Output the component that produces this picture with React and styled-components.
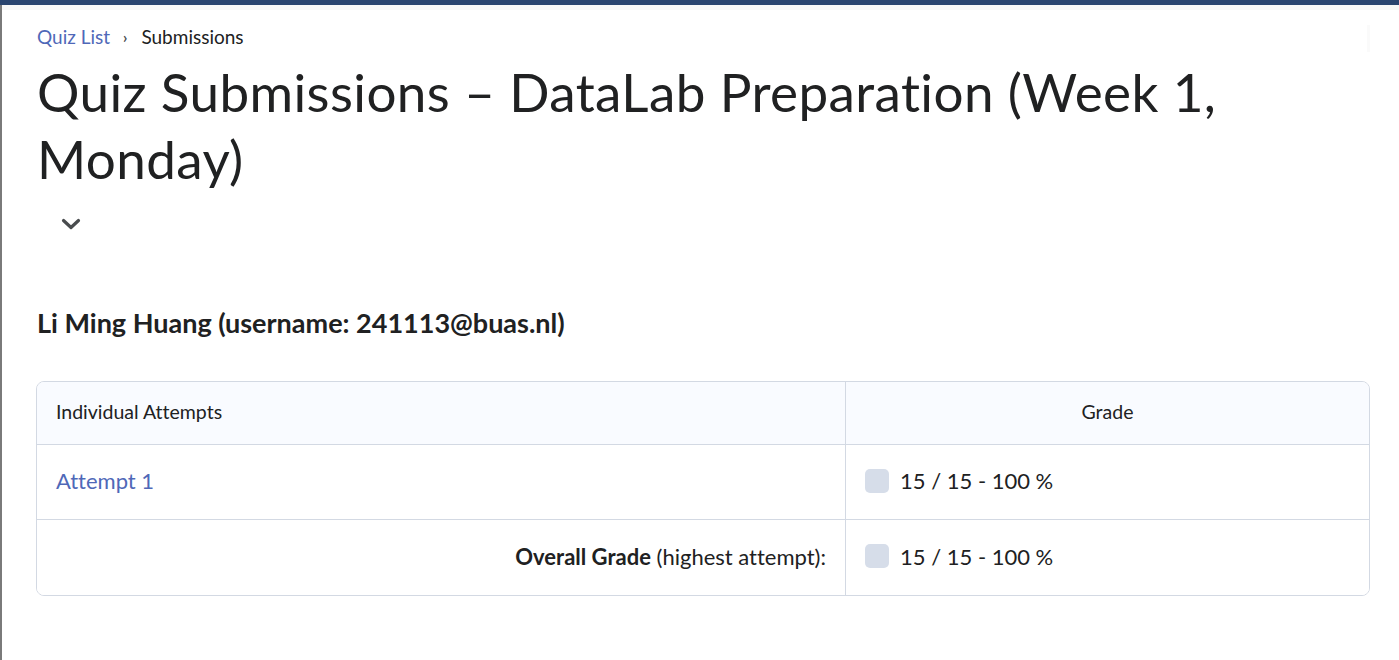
import React from 'react'
import styled, { createGlobalStyle } from 'styled-components'

const GlobalStyle = createGlobalStyle`
  html, body {
    margin: 0;
    padding: 0;
    background: #ffffff;
  }
  body {
    font-family: Lato, "Noto Sans", sans-serif;
    color: #202122;
    font-variant-ligatures: none;
  }
`

const Frame = styled.div`
  min-height: 660px;
  display: flex;
  flex-direction: column;
`

const TopBar = styled.div`
  height: 5px;
  background: #29446f;
`

const Body = styled.div`
  flex: 1;
  display: flex;
`

const LeftEdge = styled.div`
  width: 2px;
  background: #7a7a7a;
`

const Column = styled.div`
  flex: 1;
  display: flex;
  flex-direction: column;
`

const Shade = styled.div`
  height: 5px;
  background: #f7f7f7;
`

const Page = styled.main`
  flex: 1;
  padding: 15px 29px 40px 35px;
  position: relative;
`

const Breadcrumbs = styled.nav`
  display: flex;
  align-items: center;
  font-size: 19px;
  line-height: 24px;
`

const CrumbLink = styled.a`
  color: #4f68b8;
  text-decoration: none;
`

const Separator = styled.span`
  font-size: 15px;
  color: #494c4e;
  font-weight: 700;
  margin: 0 14px 0 13px;
`

const Title = styled.h1`
  margin: 9px 0 0;
  font-size: 53px;
  line-height: 67px;
  letter-spacing: 0.4px;
  font-weight: 400;
  color: #202122;
  max-width: 1230px;
`

const ToggleButton = styled.button`
  margin: 14px 0 0 16px;
  width: 36px;
  height: 36px;
  border: none;
  background: transparent;
  padding: 0;
  display: flex;
  align-items: center;
  justify-content: center;
`

const UserHeading = styled.h2`
  margin: 65px 0 0;
  font-size: 27px;
  line-height: 32px;
  font-weight: 700;
  color: #202122;
`

const Table = styled.div`
  margin: 42px 0 0 -1px;
  border: 1px solid #d3d9e3;
  border-radius: 8px;
  overflow: hidden;
`

const Row = styled.div`
  display: grid;
  grid-template-columns: 808px 1fr;
  height: ${p => p.$height}px;
  background: ${p => (p.$head ? '#f9fbff' : '#ffffff')};
  & + & {
    border-top: 1px solid #d3d9e3;
  }
`

const Cell = styled.div`
  display: flex;
  align-items: center;
  justify-content: ${p => p.$align || 'flex-start'};
  padding: 0 19px 3px;
  font-size: ${p => (p.$head ? '19.5px' : '22px')};
  color: #202122;
  & + & {
    border-left: 1px solid #d3d9e3;
  }
`

const AttemptLink = styled.a`
  color: #4f68b8;
  text-decoration: none;
`

const Chip = styled.span`
  width: 24px;
  height: 24px;
  border-radius: 5px;
  background: #d6dde9;
  margin-right: 11px;
  flex-shrink: 0;
`

const Faint = styled.div`
  position: absolute;
  right: 29px;
  top: 15px;
  width: 3px;
  height: 27px;
  background: #fafafa;
`

const Grade = ({ value }) => (
  <Cell>
    <Chip />
    <span>{value}</span>
  </Cell>
)

const App = () => {
  return (
    <>
      <GlobalStyle />
      <Frame>
        <TopBar />
        <Body>
          <LeftEdge />
          <Column>
            <Shade />
            <Page>
              <Faint />
              <Breadcrumbs>
                <CrumbLink href='#'>Quiz List</CrumbLink>
                <Separator>›</Separator>
                <span>Submissions</span>
              </Breadcrumbs>
              <Title>Quiz Submissions – DataLab Preparation (Week 1, Monday)</Title>
              <ToggleButton aria-label='Show description'>
                <svg width='20' height='12' viewBox='0 0 20 12'>
                  <path d='M2.5 2.5 L10 9.5 L17.5 2.5' fill='none' stroke='#494c4e' strokeWidth='3.2' strokeLinecap='round' strokeLinejoin='round' />
                </svg>
              </ToggleButton>
              <UserHeading>Li Ming Huang (username: 241113@buas.nl)</UserHeading>
              <Table>
                <Row $head $height={62}>
                  <Cell $head>Individual Attempts</Cell>
                  <Cell $head $align='center'>Grade</Cell>
                </Row>
                <Row $height={74}>
                  <Cell><AttemptLink href='#'>Attempt 1</AttemptLink></Cell>
                  <Grade value='15 / 15 - 100 %' />
                </Row>
                <Row $height={75}>
                  <Cell $align='flex-end'>
                    <span><b>Overall Grade</b> (highest attempt):</span>
                  </Cell>
                  <Grade value='15 / 15 - 100 %' />
                </Row>
              </Table>
            </Page>
          </Column>
        </Body>
      </Frame>
    </>
  )
}

export default App
